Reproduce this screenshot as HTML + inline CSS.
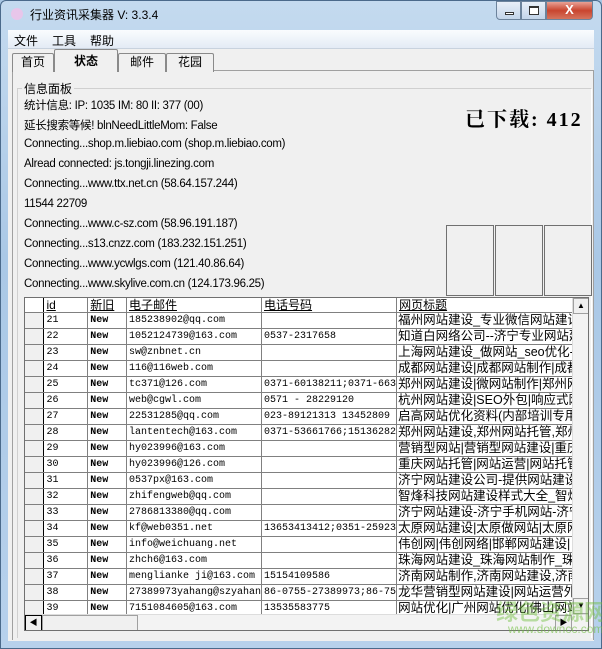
<!DOCTYPE html>
<html><head><meta charset="utf-8"><style>
*{margin:0;padding:0;box-sizing:border-box}
body{width:602px;height:649px;overflow:hidden;background:#a9c7e4;font-family:"Liberation Sans","Noto Sans CJK SC",sans-serif;font-size:12px;color:#000;position:relative}
.abs{position:absolute}
#frame{left:0;top:0;width:602px;height:649px;background:linear-gradient(#c4daef,#aac8e6 40%,#b7d1ec);border:1px solid #4b6a8b;border-radius:6px 6px 0 0}
#title{left:30px;top:6px;font-size:12px;color:#000}
.wb{top:1px;height:19px;border:1px solid #6c839c;border-radius:0 0 4px 4px}
#menu{left:8px;top:30px;width:586px;height:19px;background:linear-gradient(#fafcfe,#e3ebf5);border-bottom:1px solid #c8d2de}
#menu span{position:absolute;top:2px;font-size:12px}
#client{left:8px;top:49px;width:586px;height:592px;background:#f0f0f0}
.tab{position:absolute;top:52px;height:19px;border:1px solid #8a8a8a;border-bottom:none;background:#f0f0f0;border-radius:2px 2px 0 0;text-align:center;font-size:12px;line-height:17px}
#panel{left:12px;top:70px;width:582px;height:570px;border:1px solid #a0a0a0;border-bottom:none;background:#f0f0f0}
#grp{left:17px;top:88px;width:575px;height:550px;border:1px solid #d0d0d0;border-right:1px solid #fff;border-bottom:none}
.info{position:absolute;left:24px;font-size:11.5px;white-space:nowrap;letter-spacing:-0.3px}
.box{position:absolute;top:225px;width:48px;height:71px;border:1px solid #707070}
#grid{left:24px;top:297px;width:565px;height:334px;border:1px solid #707070;background:#fff;overflow:hidden}
table{border-collapse:collapse;position:absolute;left:0;top:0;table-layout:fixed}
td{border-right:1px solid #808080;border-bottom:1px solid #808080;height:16px;padding:0 0 0 2px;white-space:nowrap;overflow:hidden;font-family:"Liberation Mono","Noto Sans CJK SC",monospace;font-size:10px;line-height:15px;vertical-align:top}
td.ind{background:#f0f0f0;border-right:1px solid #000;padding:0}
td.t{font-family:"Liberation Sans","Noto Sans CJK SC",sans-serif;font-size:12.5px;line-height:15px;padding-left:1px}
td.n{font-weight:bold}
tr.h td{font-family:"Liberation Sans","Noto Sans CJK SC",sans-serif;font-size:12px;line-height:14px;height:14px;background:#fff;text-decoration:underline}
#vs{left:547px;top:0;width:17px;height:316px;background:#f3f3f3;border-left:1px solid #ddd}
#hs{left:0;top:316px;width:564px;height:17px;background:#f3f3f3;border-top:1px solid #ddd}
</style></head><body>
<div id="frame" class="abs"></div>
<div class="abs" style="left:11px;top:8px;width:12px;height:12px;border-radius:50%;background:#e8c6ea"></div>
<div id="title" class="abs">行业资讯采集器 V: 3.3.4</div>
<div class="abs wb" style="left:496px;width:25px;background:linear-gradient(#e8eff8,#c3d5ea);border-radius:0 0 0 4px"><div class="abs" style="left:8px;top:10px;width:9px;height:3px;border:1px solid #333;background:#fff"></div></div>
<div class="abs wb" style="left:521px;width:25px;background:linear-gradient(#e8eff8,#c3d5ea);border-radius:0"><div class="abs" style="left:7px;top:4px;width:10px;height:9px;border:1px solid #333;border-top-width:2px;background:#fff"></div></div>
<div class="abs wb" style="left:546px;width:47px;background:linear-gradient(#e8a195,#c9452f 50%,#d5745d);border-radius:0 0 4px 0;color:#fff;font-weight:bold;text-align:center;font-size:13px;line-height:16px">X</div>
<div id="menu" class="abs"><span style="left:6px">文件</span><span style="left:44px">工具</span><span style="left:82px">帮助</span></div>
<div id="client" class="abs"></div>
<div id="panel" class="abs"></div>
<div class="tab" style="left:12px;width:42px;top:53px">首页</div>
<div class="tab" style="left:118px;width:48px;top:53px">邮件</div>
<div class="tab" style="left:166px;width:48px;top:53px">花园</div>
<div class="tab" style="left:54px;width:64px;top:49px;height:23px;border-bottom:none;font-weight:bold;line-height:22px;z-index:2">状态</div>
<div id="grp" class="abs"></div>
<div class="abs" style="left:22px;top:80px;background:#f0f0f0;padding:0 2px;font-size:12px">信息面板</div>
<div class="info" style="top:97px">统计信息:  IP: 1035 IM: 80 II: 377 (00)</div>
<div class="info" style="top:117px">延长搜索等候! blnNeedLittleMom: False</div>
<div class="info" style="top:138px">Connecting...shop.m.liebiao.com (shop.m.liebiao.com)</div>
<div class="info" style="top:158px">Alread connected: js.tongji.linezing.com</div>
<div class="info" style="top:178px">Connecting...www.ttx.net.cn (58.64.157.244)</div>
<div class="info" style="top:198px">11544 22709</div>
<div class="info" style="top:218px">Connecting...www.c-sz.com (58.96.191.187)</div>
<div class="info" style="top:238px">Connecting...s13.cnzz.com (183.232.151.251)</div>
<div class="info" style="top:258px">Connecting...www.ycwlgs.com (121.40.86.64)</div>
<div class="info" style="top:278px">Connecting...www.skylive.com.cn (124.173.96.25)</div>
<div class="abs" style="left:465px;top:103px;font-family:'Liberation Serif','Noto Serif CJK SC',serif;font-size:20px;font-weight:bold;letter-spacing:2px;white-space:nowrap">已下载: 412</div>
<div class="box" style="left:446px"></div><div class="box" style="left:495px"></div><div class="box" style="left:544px"></div>
<div id="grid" class="abs">
<table>
<colgroup><col style="width:21px"><col style="width:47px"><col style="width:40px"><col style="width:133px"><col style="width:133px"><col style="width:175px"></colgroup>
<tr class="h"><td class="ind"></td><td>id</td><td>新旧</td><td>电子邮件</td><td>电话号码</td><td>网页标题</td></tr>
<tr><td class="ind"></td><td>21</td><td class="n">New</td><td>185238902@qq.com</td><td></td><td class="t">福州网站建设_专业微信网站建设</td></tr>
<tr><td class="ind"></td><td>22</td><td class="n">New</td><td>1052124739@163.com</td><td>0537-2317658</td><td class="t">知道白网络公司--济宁专业网站建</td></tr>
<tr><td class="ind"></td><td>23</td><td class="n">New</td><td>sw@znbnet.cn</td><td></td><td class="t">上海网站建设_做网站_seo优化-贵</td></tr>
<tr><td class="ind"></td><td>24</td><td class="n">New</td><td>116@116web.com</td><td></td><td class="t">成都网站建设|成都网站制作|成都</td></tr>
<tr><td class="ind"></td><td>25</td><td class="n">New</td><td>tc371@126.com</td><td>0371-60138211;0371-663</td><td class="t">郑州网站建设|微网站制作|郑州网</td></tr>
<tr><td class="ind"></td><td>26</td><td class="n">New</td><td>web@cgwl.com</td><td>0571 - 28229120</td><td class="t">杭州网站建设|SEO外包|响应式网</td></tr>
<tr><td class="ind"></td><td>27</td><td class="n">New</td><td>22531285@qq.com</td><td>023-89121313  13452809</td><td class="t">启高网站优化资料(内部培训专用</td></tr>
<tr><td class="ind"></td><td>28</td><td class="n">New</td><td>lantentech@163.com</td><td>0371-53661766;15136282</td><td class="t">郑州网站建设,郑州网站托管,郑州</td></tr>
<tr><td class="ind"></td><td>29</td><td class="n">New</td><td>hy023996@163.com</td><td></td><td class="t">营销型网站|营销型网站建设|重庆</td></tr>
<tr><td class="ind"></td><td>30</td><td class="n">New</td><td>hy023996@126.com</td><td></td><td class="t">重庆网站托管|网站运营|网站托管</td></tr>
<tr><td class="ind"></td><td>31</td><td class="n">New</td><td>0537px@163.com</td><td></td><td class="t">济宁网站建设公司-提供网站建设</td></tr>
<tr><td class="ind"></td><td>32</td><td class="n">New</td><td>zhifengweb@qq.com</td><td></td><td class="t">智烽科技网站建设样式大全_智烽</td></tr>
<tr><td class="ind"></td><td>33</td><td class="n">New</td><td>2786813380@qq.com</td><td></td><td class="t">济宁网站建设-济宁手机网站-济宁</td></tr>
<tr><td class="ind"></td><td>34</td><td class="n">New</td><td>kf@web0351.net</td><td>13653413412;0351-25923</td><td class="t">太原网站建设|太原做网站|太原网</td></tr>
<tr><td class="ind"></td><td>35</td><td class="n">New</td><td>info@weichuang.net</td><td></td><td class="t">伟创网|伟创网络|邯郸网站建设|</td></tr>
<tr><td class="ind"></td><td>36</td><td class="n">New</td><td>zhch6@163.com</td><td></td><td class="t">珠海网站建设_珠海网站制作_珠海</td></tr>
<tr><td class="ind"></td><td>37</td><td class="n">New</td><td>menglianke ji@163.com</td><td>15154109586</td><td class="t">济南网站制作,济南网站建设,济南</td></tr>
<tr><td class="ind"></td><td>38</td><td class="n">New</td><td>27389973yahang@szyahan</td><td>86-0755-27389973;86-75</td><td class="t">龙华营销型网站建设|网站运营外</td></tr>
<tr><td class="ind"></td><td>39</td><td class="n">New</td><td>7151084605@163.com</td><td>13535583775</td><td class="t">网站优化|广州网站优化|佛山网站</td></tr>
</table>
<div id="vs" class="abs"><div class="abs" style="left:0;top:0;width:16px;height:16px;background:#f0f0f0;border:1px solid #a0a0a0;text-align:center;font-size:8px;line-height:14px">▲</div><div class="abs" style="left:0;top:300px;width:16px;height:16px;background:#f0f0f0;border:1px solid #a0a0a0;text-align:center;font-size:8px;line-height:14px">▼</div></div>
<div id="hs" class="abs"><div class="abs" style="left:0;top:0;width:17px;height:16px;background:#f0f0f0;border:1px solid #000;text-align:center;font-size:8px;line-height:14px">◀</div><div class="abs" style="left:17px;top:0;width:96px;height:16px;background:#f0f0f0;border:1px solid #a0a0a0"></div><div class="abs" style="left:530px;top:0;width:17px;height:16px;background:#f0f0f0;border:1px solid #a0a0a0;text-align:center;font-size:8px;line-height:14px">▶</div></div>
</div>
<div class="abs" style="left:496px;top:598px;font-size:22px;font-weight:bold;color:rgba(110,190,60,0.45);font-family:'Noto Sans CJK SC',sans-serif;white-space:nowrap;line-height:26px">绿色资源网</div>
<div class="abs" style="left:508px;top:622px;font-size:12px;color:rgba(110,190,60,0.6);white-space:nowrap">www.downcc.com</div>
</body></html>
